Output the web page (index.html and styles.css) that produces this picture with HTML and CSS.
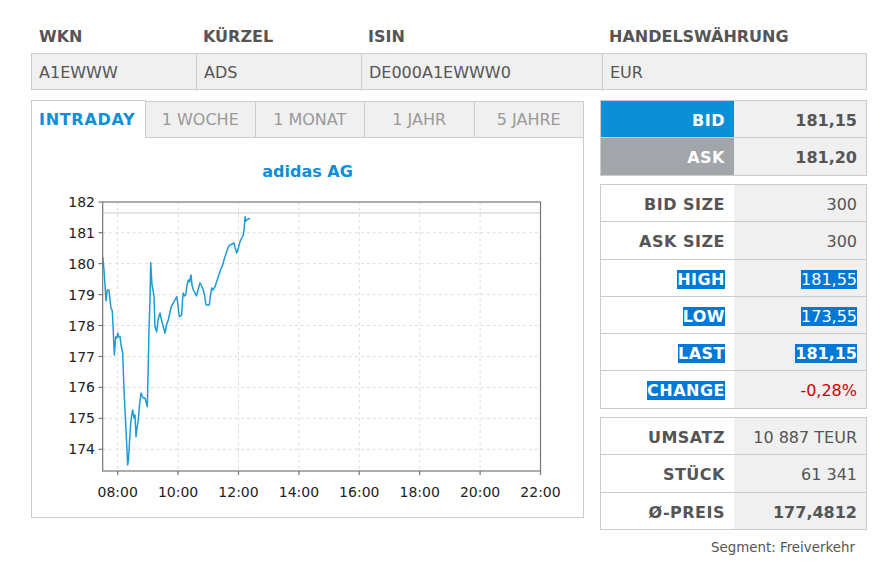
FILE: index.html
```html
<!DOCTYPE html>
<html lang="de">
<head>
    <meta charset="UTF-8">
    <title>adidas AG - Kurse</title>
    <link rel="stylesheet" href="styles.css">
</head>
<body>
    <div class="page">
        <!-- Stammdaten -->
        <div class="ident ident-head">
            <div class="ident-cell">WKN</div>
            <div class="ident-cell">KÜRZEL</div>
            <div class="ident-cell">ISIN</div>
            <div class="ident-cell">HANDELSWÄHRUNG</div>
        </div>
        <div class="ident ident-row">
            <div class="ident-cell">A1EWWW</div>
            <div class="ident-cell">ADS</div>
            <div class="ident-cell">DE000A1EWWW0</div>
            <div class="ident-cell">EUR</div>
        </div>

        <div class="main">
            <!-- Chart -->
            <div class="chart-panel">
                <div class="tabs">
                    <div class="tab active">INTRADAY</div>
                    <div class="tab">1 WOCHE</div>
                    <div class="tab">1 MONAT</div>
                    <div class="tab">1 JAHR</div>
                    <div class="tab">5 JAHRE</div>
                </div>
                <div class="chart-body">
                    <div class="chart-title">adidas AG</div>
                    <svg class="chart" width="551" height="336" viewBox="32 181 551 336">
                        <g class="grid">
                            <line x1="102.7" y1="232.7" x2="540.5" y2="232.7"/>
                            <line x1="102.7" y1="263.6" x2="540.5" y2="263.6"/>
                            <line x1="102.7" y1="294.6" x2="540.5" y2="294.6"/>
                            <line x1="102.7" y1="325.5" x2="540.5" y2="325.5"/>
                            <line x1="102.7" y1="356.5" x2="540.5" y2="356.5"/>
                            <line x1="102.7" y1="387.4" x2="540.5" y2="387.4"/>
                            <line x1="102.7" y1="418.3" x2="540.5" y2="418.3"/>
                            <line x1="102.7" y1="449.3" x2="540.5" y2="449.3"/>
                            <line x1="117.7" y1="202" x2="117.7" y2="471"/>
                            <line x1="178.1" y1="202" x2="178.1" y2="471"/>
                            <line x1="238.5" y1="202" x2="238.5" y2="471"/>
                            <line x1="298.9" y1="202" x2="298.9" y2="471"/>
                            <line x1="359.3" y1="202" x2="359.3" y2="471"/>
                            <line x1="419.7" y1="202" x2="419.7" y2="471"/>
                            <line x1="480.1" y1="202" x2="480.1" y2="471"/>
                        </g>
                        <line class="close-line" x1="102.7" y1="213" x2="540.5" y2="213"/>
                        <polyline class="price" points="102.7,256.7 104,270 105,285 106,301 107.3,290 109,290 110,300 111,308 112.3,311 113,325 114.3,355 115.7,336.7 117,338 117.7,333 119,337 120,336.7 121,345 122.7,353 124,390 126,430 127.7,465 128.5,460 130,433 131,420 132.7,410 134,418 135,415 136,436.7 137,428 138.3,420 139.5,405 141,393 143,398 145,398 147.3,406.7 148.3,363 149,330 150,300 150.7,262.7 152,285 153,290 154,296.7 155,326.7 156.7,331.7 158,320 160,313 161.5,320 163.3,326.7 165,333 166.5,325 168.3,320 170,312 171.5,306 173.3,303 175,300 176.7,296.7 178,305 179,315 180,316.7 181.7,315 182.5,300 183.3,293 184.5,296 185.7,295 187,285 188.3,280 189.5,282 191,275 192,285 193.3,290 195,293 196.5,296 198,290 200,283 201.7,286 203.3,290 204.5,295 206,305 209.3,305 210.5,295 211.7,288 213,290 215,286.7 216.5,282 218.3,276.7 220.5,270 222.7,265 224.5,258 226.7,251.7 228.3,247 230,245 232,244 234,243 235,247 236.7,253 238.3,248 240,241.7 241.7,238 243.3,235 244.3,228 245,216.7 246,221 246.7,220 248,219 250,218.3"/>
                        <rect class="frame" x="102.7" y="202" width="437.8" height="269"/>
                        <g class="ticks">
                            <line x1="98.5" y1="202" x2="102.7" y2="202"/>
                            <line x1="98.5" y1="232.7" x2="102.7" y2="232.7"/>
                            <line x1="98.5" y1="263.6" x2="102.7" y2="263.6"/>
                            <line x1="98.5" y1="294.6" x2="102.7" y2="294.6"/>
                            <line x1="98.5" y1="325.5" x2="102.7" y2="325.5"/>
                            <line x1="98.5" y1="356.5" x2="102.7" y2="356.5"/>
                            <line x1="98.5" y1="387.4" x2="102.7" y2="387.4"/>
                            <line x1="98.5" y1="418.3" x2="102.7" y2="418.3"/>
                            <line x1="98.5" y1="449.3" x2="102.7" y2="449.3"/>
                            <line x1="117.7" y1="471" x2="117.7" y2="475"/>
                            <line x1="178.1" y1="471" x2="178.1" y2="475"/>
                            <line x1="238.5" y1="471" x2="238.5" y2="475"/>
                            <line x1="298.9" y1="471" x2="298.9" y2="475"/>
                            <line x1="359.3" y1="471" x2="359.3" y2="475"/>
                            <line x1="419.7" y1="471" x2="419.7" y2="475"/>
                            <line x1="480.1" y1="471" x2="480.1" y2="475"/>
                            <line x1="540.5" y1="471" x2="540.5" y2="475"/>
                        </g>
                        <g class="ylabels">
                            <text x="95" y="207">182</text>
                            <text x="95" y="237.7">181</text>
                            <text x="95" y="268.6">180</text>
                            <text x="95" y="299.6">179</text>
                            <text x="95" y="330.5">178</text>
                            <text x="95" y="361.5">177</text>
                            <text x="95" y="392.4">176</text>
                            <text x="95" y="423.3">175</text>
                            <text x="95" y="454.3">174</text>
                        </g>
                        <g class="xlabels">
                            <text x="117.7" y="497">08:00</text>
                            <text x="178.1" y="497">10:00</text>
                            <text x="238.5" y="497">12:00</text>
                            <text x="298.9" y="497">14:00</text>
                            <text x="359.3" y="497">16:00</text>
                            <text x="419.7" y="497">18:00</text>
                            <text x="480.1" y="497">20:00</text>
                            <text x="540.5" y="497">22:00</text>
                        </g>
                    </svg>
                </div>
            </div>

            <!-- Kursdaten -->
            <div class="quotes">
                <div class="qbox">
                    <div class="qrow">
                        <div class="qlabel bid">BID</div>
                        <div class="qval strong">181,15</div>
                    </div>
                    <div class="qrow">
                        <div class="qlabel ask">ASK</div>
                        <div class="qval strong">181,20</div>
                    </div>
                </div>
                <div class="qbox">
                    <div class="qrow">
                        <div class="qlabel">BID SIZE</div>
                        <div class="qval">300</div>
                    </div>
                    <div class="qrow">
                        <div class="qlabel">ASK SIZE</div>
                        <div class="qval">300</div>
                    </div>
                    <div class="qrow">
                        <div class="qlabel"><span class="sel">HIGH</span></div>
                        <div class="qval"><span class="sel">181,55</span></div>
                    </div>
                    <div class="qrow">
                        <div class="qlabel"><span class="sel">LOW</span></div>
                        <div class="qval"><span class="sel">173,55</span></div>
                    </div>
                    <div class="qrow">
                        <div class="qlabel"><span class="sel">LAST</span></div>
                        <div class="qval strong"><span class="sel">181,15</span></div>
                    </div>
                    <div class="qrow">
                        <div class="qlabel"><span class="sel">CHANGE</span></div>
                        <div class="qval negative">-0,28%</div>
                    </div>
                </div>
                <div class="qbox">
                    <div class="qrow">
                        <div class="qlabel">UMSATZ</div>
                        <div class="qval">10 887 TEUR</div>
                    </div>
                    <div class="qrow">
                        <div class="qlabel">STÜCK</div>
                        <div class="qval">61 341</div>
                    </div>
                    <div class="qrow">
                        <div class="qlabel">Ø-PREIS</div>
                        <div class="qval strong">177,4812</div>
                    </div>
                </div>
                <div class="segment">Segment: Freiverkehr</div>
            </div>
        </div>
    </div>
</body>
</html>
```

FILE: styles.css
```css
html, body {
    margin: 0;
    padding: 0;
    background: #fff;
}
body {
    font-family: 'DejaVu Sans', Verdana, sans-serif;
    font-size: 16px;
    color: #555;
}
.page {
    width: 836px;
    padding: 27px 0 0 31px;
}

/* Stammdaten */
.ident {
    display: grid;
    grid-template-columns: 164px 165px 241px 1fr;
    box-sizing: border-box;
}
.ident-head {
    padding-left: 1px;
    margin-bottom: 6px;
    font-weight: bold;
    line-height: 20px;
}
.ident-head .ident-cell {
    padding-left: 7px;
}
.ident-row {
    border: 1px solid #ccc;
    background: #f0f0f0;
    height: 37px;
    line-height: 37px;
}
.ident-row .ident-cell {
    padding-left: 7px;
}
.ident-row .ident-cell + .ident-cell {
    border-left: 1px solid #ccc;
}

.main {
    display: flex;
    gap: 16px;
    margin-top: 10px;
}

/* Chart */
.chart-panel {
    width: 553px;
}
.tabs {
    display: flex;
    align-items: flex-end;
    height: 38px;
}
.tab {
    box-sizing: border-box;
    flex: 1;
    height: 37px;
    line-height: 36px;
    text-align: center;
    color: #999;
    background: #f0f0f0;
    border-top: 1px solid #ccc;
    border-bottom: 1px solid #ccc;
    border-right: 1px solid #ccc;
}
.tab.active {
    flex: 0 0 115px;
    height: 38px;
    line-height: 37px;
    text-align: left;
    padding-left: 7px;
    color: #0b8fd6;
    font-weight: bold;
    letter-spacing: 0.7px;
    background: #fff;
    border-left: 1px solid #ccc;
    border-bottom: none;
}
.chart-body {
    height: 380px;
    box-sizing: border-box;
    border: 1px solid #ccc;
    border-top: none;
    padding-top: 24px;
}
.chart-title {
    text-align: center;
    line-height: 20px;
    font-weight: bold;
    color: #0b8fd6;
    margin-bottom: -1px;
}
.chart {
    display: block;
    font-family: 'DejaVu Sans', sans-serif;
    font-size: 14px;
}
.grid line {
    stroke: #ddd;
    stroke-width: 1;
    stroke-dasharray: 3 3;
}
.close-line {
    stroke: #ccc;
    stroke-width: 1;
}
.price {
    fill: none;
    stroke: #1b9bda;
    stroke-width: 1.5;
    stroke-linejoin: round;
}
.frame {
    fill: none;
    stroke: #777;
    stroke-width: 1.2;
}
.ticks line {
    stroke: #777;
    stroke-width: 1.2;
}
.ylabels text {
    fill: #222;
    text-anchor: end;
}
.xlabels text {
    fill: #222;
    text-anchor: middle;
}

/* Kursdaten */
.quotes {
    width: 267px;
}
.qbox {
    border: 1px solid #ccc;
    margin-bottom: 8.4px;
}
.qrow {
    display: grid;
    grid-template-columns: 133px 1fr;
    height: 36.3px;
}
.qrow + .qrow {
    border-top: 1px solid #ccc;
}
.qlabel,
.qval {
    padding-top: 3px;
    line-height: 33px;
    text-align: right;
    padding-right: 9px;
}
.qlabel {
    font-weight: bold;
    letter-spacing: 0.5px;
    background: #fff;
}
.qlabel.bid {
    background: #0b8fd6;
    color: #fff;
}
.qlabel.ask {
    background: #a2a5a9;
    color: #fff;
}
.qval {
    background: #f0f0f0;
}
.qval.strong {
    font-weight: bold;
}
.qval.negative {
    color: #c00;
}
.sel {
    background: #0078d7;
    color: #fff;
}
.segment {
    margin-top: 5px;
    text-align: right;
    padding-right: 12px;
    font-size: 13.4px;
    line-height: 20px;
}
```
